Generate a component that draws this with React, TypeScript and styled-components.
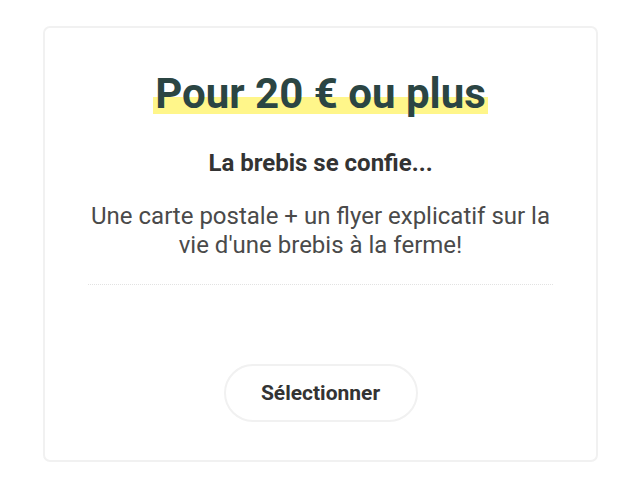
import styled, { createGlobalStyle } from "styled-components"

const GlobalStyle = createGlobalStyle`
  html, body {
    margin: 0;
    padding: 0;
    background: #fff;
  }
  body {
    font-family: Roboto, "Liberation Sans", sans-serif;
  }
`

export default function App() {
  return (
    <>
      <GlobalStyle />
      <Page>
        <Card>
          <Title>
            <Highlight>Pour 20 € ou plus</Highlight>
          </Title>
          <Subtitle>La brebis se confie...</Subtitle>
          <Description>
            Une carte postale + un flyer explicatif sur la vie d'une brebis à la ferme!
          </Description>
          <Divider />
          <SelectButton>Sélectionner</SelectButton>
        </Card>
      </Page>
    </>
  )
}

const Page = styled.div`
  padding: 26px 42px 27px 43px;
`

const Card = styled.div`
  box-sizing: border-box;
  height: 436px;
  border: 2px solid #f1f1f1;
  border-radius: 7px;
  padding: 41px 43px 0;
  display: flex;
  flex-direction: column;
  align-items: center;
  text-align: center;
`

const Title = styled.h2`
  margin: 0;
  font-size: 42px;
  font-weight: 700;
  line-height: 50px;
  color: #2b4543;
`

const Highlight = styled.span`
  background: linear-gradient(transparent 58%, #fff68a 58%, #fff68a 92%, transparent 92%);
  padding: 0 2px;
`

const Subtitle = styled.h3`
  margin: 29px 0 0;
  font-size: 24px;
  font-weight: 700;
  line-height: 30px;
  color: #333;
`

const Description = styled.p`
  margin: 24px 0 0;
  font-size: 24px;
  line-height: 29px;
  color: #4a4a4a;
`

const Divider = styled.hr`
  align-self: stretch;
  margin: 24px 0 0;
  border: 0;
  border-top: 1px dotted #e2e2e2;
`

const SelectButton = styled.button`
  margin-top: 79px;
  width: 194px;
  height: 58px;
  border: 2px solid #f1f1f1;
  border-radius: 29px;
  background: #fff;
  font-family: Roboto, "Liberation Sans", sans-serif;
  font-size: 21px;
  font-weight: 700;
  color: #333;
  cursor: pointer;
`
